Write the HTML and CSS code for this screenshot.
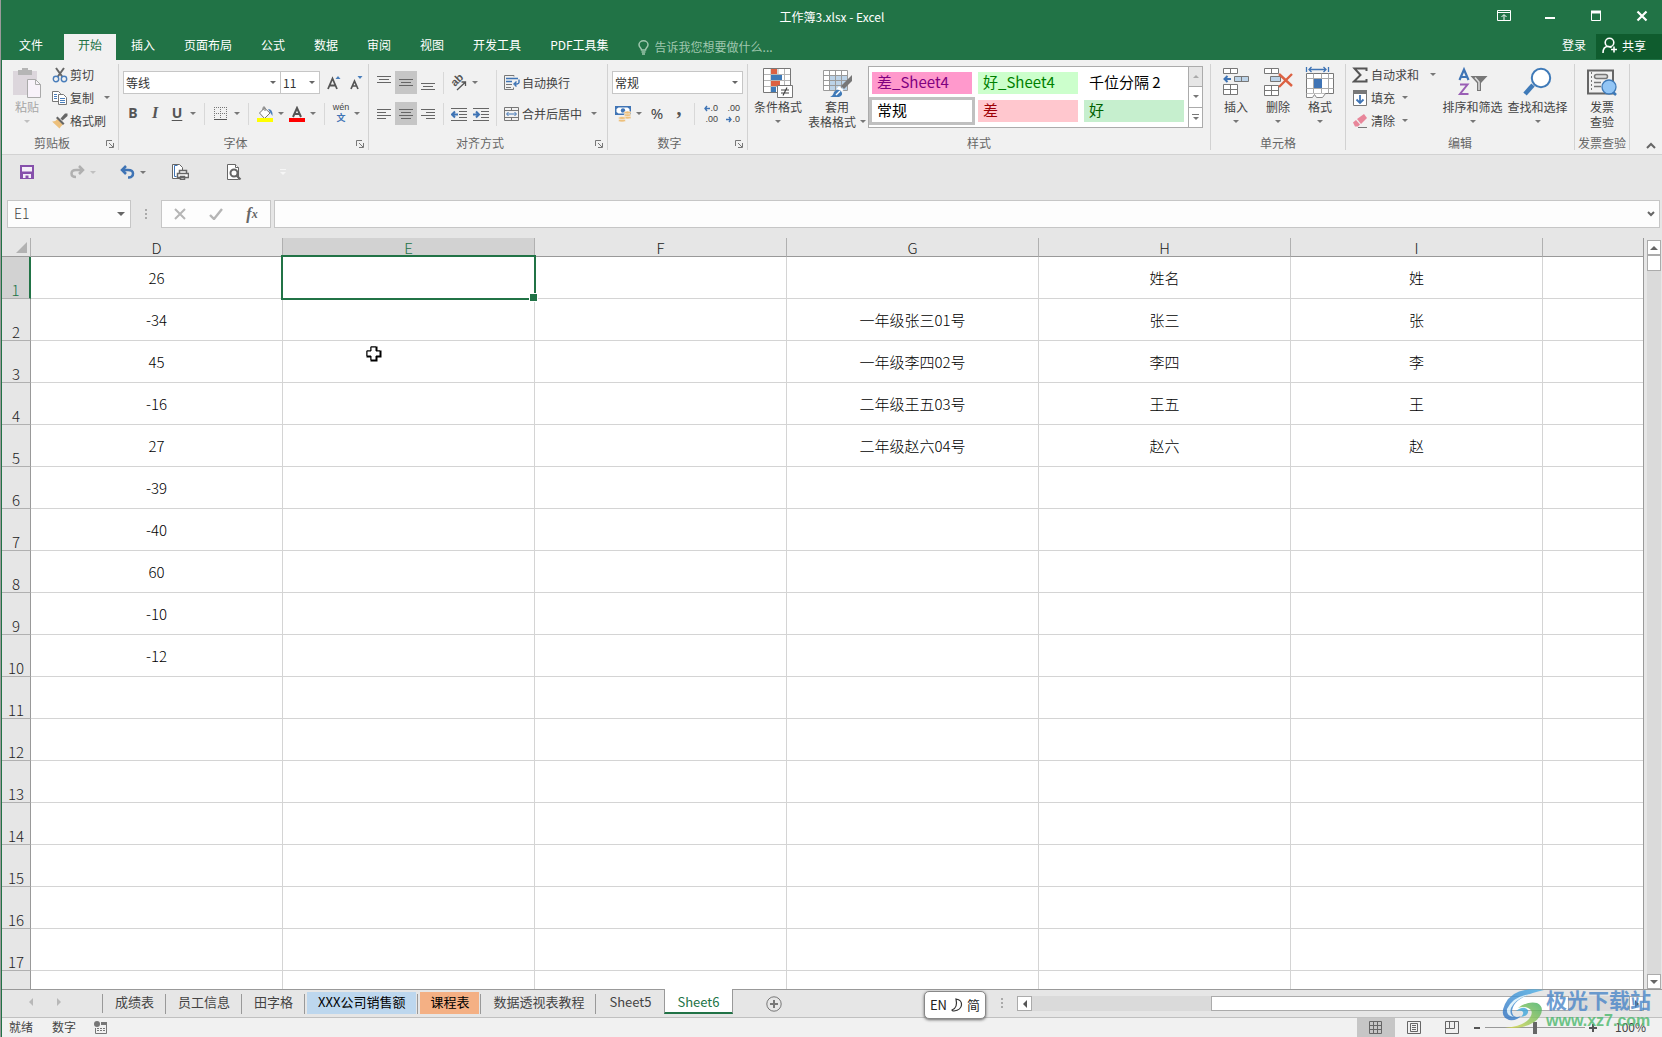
FILE: index.html
```html
<!DOCTYPE html>
<html lang="zh-CN">
<head>
<meta charset="utf-8">
<title>工作簿3.xlsx - Excel</title>
<link rel="stylesheet" href="styles.css">
</head>
<body>
<div class="app">
  <header class="titlebar">
    <h1 class="title">工作簿3.xlsx - Excel</h1>
    <div class="win-controls">
      <button aria-label="功能区显示选项"><svg width="14" height="12" viewBox="0 0 14 12" fill="none" stroke="#fff"><path d="M.5 .5h13v10H.5zM.5 2.5h13M7 10V5M4.5 7L7 4.500 9.500 7"/></svg></button>
      <button aria-label="最小化"><svg width="12" height="12" viewBox="0 0 12 12"><path d="M1 7h10v2H1z" fill="#fff"/></svg></button>
      <button aria-label="最大化"><svg width="12" height="12" viewBox="0 0 12 12" fill="none" stroke="#fff"><path d="M1.500 1.500h9v9h-9z"/><path d="M1 2h10" stroke-width="3"/></svg></button>
      <button aria-label="关闭"><svg width="12" height="12" viewBox="0 0 12 12" stroke="#fff" stroke-width="2.200"><path d="M1.500 1.500l9 9M10.500 1.500l-9 9"/></svg></button>
    </div>
  </header>

  <nav class="tabs">
    <button class="tab file">文件</button>
    <button class="tab active">开始</button>
    <button class="tab">插入</button>
    <button class="tab">页面布局</button>
    <button class="tab">公式</button>
    <button class="tab">数据</button>
    <button class="tab">审阅</button>
    <button class="tab">视图</button>
    <button class="tab">开发工具</button>
    <button class="tab">PDF工具集</button>
    <label class="tell">
      <svg width="11" height="15" viewBox="0 0 11 15" fill="none" stroke="#9fc7ae" stroke-width="1.500"><path d="M3.500 10C3.500 8 1 7.500 1 4.800a4.500 4 0 0 1 9 0C10 7.500 7.500 8 7.500 10z"/><path d="M3.500 12h4M4 14h3"/></svg>
      <input type="text" placeholder="告诉我您想要做什么..." aria-label="告诉我您想要做什么">
    </label>
    <a class="signin" href="#">登录</a>
    <button class="share"><svg width="16" height="17" viewBox="0 0 16 17" fill="none" stroke="#fff" stroke-width="1.600"><circle cx="7.500" cy="5.500" r="4.300"/><path d="M1 16c0-4 2-6.500 5-6.500 1.500 0 2.500.3 3.500 1.200M12 9.500v6M9 12.500h6"/></svg>共享</button>
  </nav>

  <section class="ribbon">
    <div class="group g-clip">
      <div class="body">
        <button class="big w50 off">
          <svg width="30" height="30" viewBox="0 0 30 30"><path d="M1 3h24v24H1z" fill="#dcd6dc"/><path d="M6 2h4V0h6v2h4v5H6z" fill="#b5b5b5"/><path d="M15.500 11.500h8l5 5v13h-13z" fill="#f8f2fa" stroke="#aaa"/><path d="M23.500 11.500v5h5" fill="none" stroke="#aaa"/></svg>
          <span>粘贴</span><i class="caret"></i>
        </button>
        <div class="stack">
          <button class="small"><svg width="16" height="16" viewBox="0 0 16 16" fill="none"><path d="M4 1l6.500 9M12 1L5.500 10" stroke="#666" stroke-width="2"/><circle cx="4" cy="12" r="2.700" stroke="#4a7ebb" stroke-width="1.400"/><circle cx="12" cy="12" r="2.700" stroke="#4a7ebb" stroke-width="1.400"/></svg>剪切</button>
          <button class="small"><svg width="16" height="16" viewBox="0 0 16 16" fill="#fff" stroke="#777"><path d="M.5 1.500h6l2 2v8h-8z"/><path d="M6.500 4.500h5l3 3v7h-8z"/><path d="M2 4.500h3M2 6.500h3M2 8.500h3M8 8.500h5M8 10.500h5M8 12.500h5" stroke="#4a7ebb"/></svg>复制<i class="caret far"></i></button>
          <button class="small"><svg width="16" height="16" viewBox="0 0 16 16"><path d="M0 8.500q3 .5 5.500-2.500l5.500 5.500q-2 1.500-3.500 4z" fill="#edc07c"/><path d="M5.500 3.500l7 7-1.500 1.500L4 5z" fill="#666"/><path d="M8.500 5.500l2 2 5-4.500V.5h-2.500z" fill="#666"/></svg>格式刷</button>
        </div>
      </div>
      <div class="foot"><span>剪贴板</span><button class="launch" aria-label="剪贴板设置"><svg width="8" height="8" viewBox="0 0 8 8" fill="none" stroke="#777"><path d="M.5 6V.5H6M3 3l4 4M7.500 3v4.500H3"/></svg></button></div>
    </div>

    <div class="group g-font">
      <div class="body rows">
        <div class="row">
          <span class="combo w158"><select aria-label="字体"><option>等线</option></select></span>
          <span class="combo w40"><select aria-label="字号"><option>11</option></select></span>
          <button class="tb grow-a" aria-label="增大字号"><svg width="16" height="16" viewBox="0 0 16 16"><path d="M1 14L5.500 3.500 10 14M2.500 10.500h6" fill="none" stroke="#555" stroke-width="1.800"/><path d="M8.500 4L11 1l2.500 3z" fill="#4a7ebb"/></svg></button>
          <button class="tb" aria-label="减小字号"><svg width="16" height="16" viewBox="0 0 16 16"><path d="M2 14l3.500-8L9 14M3 11h5" fill="none" stroke="#555" stroke-width="1.700"/><path d="M8.500 1L11 4l2.500-3z" fill="#4a7ebb"/></svg></button>
        </div>
        <div class="row wide-sep">
          <button class="tb fmt b">B</button><button class="tb fmt i">I</button><button class="tb fmt u">U</button><button class="cb" aria-label="下划线选项"><i class="caret"></i></button>
          <i class="sep"></i>
          <button class="tb" aria-label="边框"><svg width="14" height="14" viewBox="0 0 14 14" fill="none" stroke="#777"><path d="M.5 0v13M6.500 0v13M12.500 0v13M0 .5h13M0 6.500h13" stroke-dasharray="1 1"/><path d="M0 12.500h13" stroke="#555"/></svg></button><button class="cb" aria-label="边框选项"><i class="caret"></i></button>
          <i class="sep"></i>
          <button class="tb" aria-label="填充颜色"><svg width="16" height="16" viewBox="0 0 16 16"><path d="M2.500 7l5-5 5.500 5-5.500 5.500z" fill="#fff" stroke="#777"/><path d="M6 4V1.500q1-1.500 2 0V5" fill="none" stroke="#777"/><path d="M11 3q5 0 4.500 7l-2-3z" fill="#4a7ebb"/><path d="M0 12h16v4H0z" fill="#ff0"/></svg></button><button class="cb" aria-label="填充颜色选项"><i class="caret"></i></button>
          <button class="tb" aria-label="字体颜色"><svg width="16" height="16" viewBox="0 0 16 16"><path d="M4 11L8 2l4 9M5.500 8h5" fill="none" stroke="#555" stroke-width="2"/><path d="M0 12h16v4H0z" fill="#f00"/></svg></button><button class="cb" aria-label="字体颜色选项"><i class="caret"></i></button>
          <i class="sep"></i>
          <button class="tb pinyin" aria-label="拼音"><span>wén</span><b>文</b></button><button class="cb" aria-label="拼音选项"><i class="caret"></i></button>
        </div>
      </div>
      <div class="foot"><span>字体</span><button class="launch" aria-label="字体设置"><svg width="8" height="8" viewBox="0 0 8 8" fill="none" stroke="#777"><path d="M.5 6V.5H6M3 3l4 4M7.500 3v4.500H3"/></svg></button></div>
    </div>

    <div class="group g-align">
      <div class="body">
        <div class="rows">
          <div class="row">
            <button class="tb" aria-label="顶端对齐"><svg class="ln" width="14" height="16" viewBox="0 0 14 16"><path d="M0 1.500h14M2 4.500h10M0 7.500h14"/></svg></button><button class="tb on" aria-label="垂直居中"><svg class="ln" width="14" height="16" viewBox="0 0 14 16"><path d="M0 4.500h14M2 7.500h10M0 10.500h14"/></svg></button><button class="tb" aria-label="底端对齐"><svg class="ln" width="14" height="16" viewBox="0 0 14 16"><path d="M0 8.500h14M2 11.500h10M0 14.500h14"/></svg></button>
            <i class="sep"></i>
            <button class="tb" aria-label="方向"><svg class="orient" width="16" height="16" viewBox="0 0 16 16"><text x="4" y="12" transform="rotate(-45 4 12)">ab</text><path d="M6 15L14 7.500M10.500 7H14.500V11" fill="none" stroke="#555" stroke-width="1.300"/></svg></button><button class="cb" aria-label="方向选项"><i class="caret"></i></button>
          </div>
          <div class="row">
            <button class="tb" aria-label="左对齐"><svg class="ln" width="14" height="14" viewBox="0 0 14 14"><path d="M0 2.500h14M0 5.500h9M0 8.500h14M0 11.500h9"/></svg></button><button class="tb on" aria-label="居中"><svg class="ln" width="14" height="14" viewBox="0 0 14 14"><path d="M0 2.500h14M2 5.500h10M0 8.500h14M2 11.500h10"/></svg></button><button class="tb" aria-label="右对齐"><svg class="ln" width="14" height="14" viewBox="0 0 14 14"><path d="M0 2.500h14M5 5.500h9M0 8.500h14M5 11.500h9"/></svg></button>
            <i class="sep"></i>
            <button class="tb" aria-label="减少缩进"><svg class="ln" width="16" height="14" viewBox="0 0 16 14"><path d="M0 1.500h16M8 4.500h8M8 7.500h8M8 10.500h8M0 13.500h16"/><path d="M7 7.500H2M4 4.500l-3 3 3 3" stroke="#3f74b5" stroke-width="2"/></svg></button><button class="tb" aria-label="增加缩进"><svg class="ln" width="16" height="14" viewBox="0 0 16 14"><path d="M0 1.500h16M8 4.500h8M8 7.500h8M8 10.500h8M0 13.500h16"/><path d="M0 7.500h5M3 4.500l3 3-3 3" stroke="#3f74b5" stroke-width="2"/></svg></button>
          </div>
        </div>
        <i class="sep long"></i>
        <div class="rows">
          <div class="row"><button class="txt"><svg width="16" height="16" viewBox="0 0 16 16" fill="none" stroke="#777"><path d="M10 1.500V.5H.5v14h9v-2M2 9.500h6M2 12.500h5"/><path d="M2 3.500h12M2 6.500h6M15 4.500v3q0 1-2 1.500h-2M12.500 6.500L10 9l2.500 2.500" stroke="#3f74b5" stroke-width="1.400"/></svg>自动换行</button></div>
          <div class="row"><button class="txt"><svg width="16" height="16" viewBox="0 0 16 16" fill="none" stroke="#777"><path d="M.5 1.500h14v13H.5zM.5 4.500h14M.5 11.500h14M7.500 1.500v3M7.500 11.500v3"/><path d="M3 8h9M4.500 6L2.500 8l2 2M10.500 6l2 2-2 2" stroke="#3f74b5"/></svg>合并后居中</button><button class="cb apart" aria-label="合并选项"><i class="caret"></i></button></div>
        </div>
      </div>
      <div class="foot"><span>对齐方式</span><button class="launch" aria-label="对齐设置"><svg width="8" height="8" viewBox="0 0 8 8" fill="none" stroke="#777"><path d="M.5 6V.5H6M3 3l4 4M7.500 3v4.500H3"/></svg></button></div>
    </div>

    <div class="group g-num">
      <div class="body rows">
        <div class="row"><span class="combo w131"><select aria-label="数字格式"><option>常规</option></select></span></div>
        <div class="row">
          <button class="tb" aria-label="会计数字格式"><svg width="16" height="16" viewBox="0 0 16 16"><path d="M0 0h16v9H0z" fill="#3f74b5"/><path d="M1.500 3l2-1.500h9l2 1.500v3l-2 1.500h-9l-2-1.500z" fill="#fff"/><circle cx="8" cy="4.500" r="2.200" fill="#3f74b5"/><g fill="#edc07c" stroke="#f1f1f1" stroke-width=".6"><ellipse cx="12.500" cy="11.500" rx="3.500" ry="1.500"/><ellipse cx="12.500" cy="9" rx="3.500" ry="1.500"/><ellipse cx="12.500" cy="6.500" rx="3.500" ry="1.500"/><ellipse cx="7" cy="14.500" rx="3.500" ry="1.500"/><ellipse cx="7" cy="12" rx="3.500" ry="1.500"/></g></svg></button><button class="cb" aria-label="会计格式选项"><i class="caret"></i></button>
          <button class="tb pct">%</button><button class="tb comma">,</button>
          <i class="sep"></i>
          <button class="tb dec" aria-label="增加小数位数"><span><svg width="6" height="7" viewBox="0 0 6 7" fill="none" stroke="#3f74b5" stroke-width="1.400"><path d="M6 3.500H1M3 1L1 3.500 3 6"/></svg>.0</span><span>.00</span></button><button class="tb dec" aria-label="减少小数位数"><span>.00</span><span><svg width="6" height="7" viewBox="0 0 6 7" fill="none" stroke="#3f74b5" stroke-width="1.400"><path d="M0 3.500h5M3 1l2 2.500L3 6"/></svg>.0</span></button>
        </div>
      </div>
      <div class="foot"><span>数字</span><button class="launch" aria-label="数字设置"><svg width="8" height="8" viewBox="0 0 8 8" fill="none" stroke="#777"><path d="M.5 6V.5H6M3 3l4 4M7.500 3v4.500H3"/></svg></button></div>
    </div>

    <div class="group g-style">
      <div class="body">
        <button class="big w60">
          <svg width="30" height="30" viewBox="0 0 30 30"><path d="M.5 .5h27v24H.5z" fill="#fff" stroke="#777"/><path d="M8 1v23M15 1v23M21.500 1v23M1 6.500h26M1 12.500h26M1 18.500h26" stroke="#b5b5b5"/><path d="M8 1h6v5H8zM8 13h9v5H8z" fill="#dc6142"/><path d="M8 7h11v5H8zM8 19h5v5H8z" fill="#3f7ab8"/><path d="M14.500 17.500h15v12h-15z" fill="#fff" stroke="#777"/><path d="M18 22h8M18 25h8M24 19.500l-4 8" stroke="#444" stroke-width="1.200"/></svg>
          <span>条件格式</span><i class="caret"></i>
        </button>
        <button class="big w58">
          <svg width="30" height="30" viewBox="0 0 30 30"><path d="M1.500 2.500h24v20h-24z" fill="#fff"/><path d="M8 8h18v14H8z" fill="#bcd3e8"/><path d="M1.500 2.500h24v20h-24zM7.500 2.500v20M13.500 2.500v20M19.500 2.500v20M1.500 7.500h24M1.500 12.500h24M1.500 17.500h24" fill="none" stroke="#9a9a9a"/><path d="M30 7v6L22 21l-3-3z" fill="#777"/><path d="M17 18l4.500 4-2 2-5-3z" fill="#fff"/><path d="M8 29q3-1 4-5 3-4 7-1 3 4-2 6z" fill="#3f7ab8"/><path d="M14 27l4-4" stroke="#fff" stroke-width="1.500"/></svg>
          <span>套用</span><span class="last">表格格式<i class="caret"></i></span>
        </button>
        <div class="gallery">
          <div class="swatches">
            <button class="sw pink">差_Sheet4</button><button class="sw lime">好_Sheet4</button><button class="sw">千位分隔 2</button>
            <button class="sw picked">常规</button><button class="sw bad">差</button><button class="sw good">好</button>
          </div>
          <div class="gscroll">
            <button class="dim" aria-label="上一行"><i class="caret up"></i></button>
            <button aria-label="下一行"><i class="caret"></i></button>
            <button aria-label="其他样式"><i class="bar"></i><i class="caret"></i></button>
          </div>
        </div>
      </div>
      <div class="foot"><span>样式</span></div>
    </div>

    <div class="group g-cells">
      <div class="body">
        <button class="big w42"><svg width="28" height="30" viewBox="0 0 28 30"><g fill="#fff" stroke="#777"><path d="M1.500 .5h14v5h-14zM8.500 .5v5M1.500 16.500h14v10h-14zM8.500 16.500v10M1.500 21.500h14"/><path d="M12.500 8.500h14v5h-14zM19.500 8.500v5" fill="#bcd3e8"/></g><path d="M9 11H3M5.500 8L2.500 11l3 3" fill="none" stroke="#3f74b5" stroke-width="2"/></svg><span>插入</span><i class="caret"></i></button>
        <button class="big w42"><svg width="30" height="30" viewBox="0 0 30 30"><g fill="#fff" stroke="#777"><path d="M1.500 .5h14v5h-14zM8.500 .5v5M1.500 17.500h14v10h-14zM8.500 17.500v10M1.500 22.500h14"/><path d="M7.500 8.500h10v5h-10z" fill="#bcd3e8"/></g><path d="M16 6l13 12M29 6L16 19" stroke="#dc6142" stroke-width="2.400"/></svg><span>删除</span><i class="caret"></i></button>
        <button class="big w42"><svg width="30" height="30" viewBox="0 0 30 30"><path d="M1.500 5.500h27v20h-27z" fill="#fff" stroke="#777"/><path d="M1.500 10.500h27M1.500 20.500h27M8.500 5.500v20M16.500 5.500v20M23.500 5.500v20" stroke="#aaa"/><path d="M9 11h8v9H9z" fill="#3f74b5"/><path d="M1.500 25.500v4h6l2-3 2 3h6l3-4" fill="#fff" stroke="#888"/><path d="M1.500-1v5M23.500-1v5M4 1.500h17M6.500-1L4 1.500 6.500 4M18.500-1L21 1.500 18.500 4" fill="none" stroke="#3f74b5" stroke-width="1.300"/></svg><span>格式</span><i class="caret"></i></button>
      </div>
      <div class="foot"><span>单元格</span></div>
    </div>

    <div class="group g-edit">
      <div class="body">
        <div class="stack">
          <button class="small"><svg width="16" height="16" viewBox="0 0 16 16" fill="none" stroke="#555" stroke-width="2"><path d="M14.500 4V1.500H2.500L8.500 8l-6.500 6.500h12.500V12"/></svg>自动求和<i class="caret far"></i></button>
          <button class="small"><svg width="16" height="16" viewBox="0 0 16 16"><path d="M1.500 .5h13v15h-13z" fill="#fff" stroke="#777"/><path d="M1 0h14v4H1z" fill="#777"/><path d="M8 5v8M4.500 9.500L8 13l3.500-3.500" fill="none" stroke="#3f74b5" stroke-width="1.800"/></svg>填充<i class="caret near"></i></button>
          <button class="small"><svg width="16" height="16" viewBox="0 0 16 16"><path d="M5 6l7-5 3 4-6 6z" fill="#e8869a"/><path d="M1 9.500l3-2.500 4 4.500-2 2H3z" fill="#e8869a"/><path d="M6 14.500h9" stroke="#777"/></svg>清除<i class="caret near"></i></button>
        </div>
        <button class="big w65 push"><svg width="30" height="30" viewBox="0 0 30 30" fill="none"><path d="M1.500 12L6 1.500 10.500 12M3 9h6" stroke="#3f74b5" stroke-width="2.200"/><path d="M2 16.500h7.500L2 26h8.500" stroke="#9a5fb5" stroke-width="2"/><path d="M12.500 8h17L23 15v8h-4v-8z" fill="#777"/><path d="M17 9.500l4 4.500v8" stroke="#ddd" stroke-width="1.500"/></svg><span>排序和筛选</span><i class="caret"></i></button>
        <button class="big w65"><svg width="30" height="30" viewBox="0 0 30 30"><path d="M10 17L2 26" stroke="#3f7ab8" stroke-width="4.500"/><circle cx="18" cy="10" r="9.200" fill="#fff" stroke="#3f7ab8" stroke-width="2"/></svg><span>查找和选择</span><i class="caret"></i></button>
      </div>
      <div class="foot"><span>编辑</span></div>
    </div>

    <div class="group g-inv">
      <div class="body">
        <button class="big w54"><svg width="32" height="30" viewBox="0 0 32 30"><path d="M2 2.500h25v23H2z" fill="#f1f1f1" stroke="#666" stroke-width="2"/><path d="M5.500 4v20" stroke="#777" stroke-dasharray="2 2"/><rect x="8.500" y="6.500" width="13" height="4" rx="2" fill="#ddd" stroke="#777" stroke-width="1.500"/><path d="M8 14.500h7M8 18.500h7" stroke="#777" stroke-width="1.500"/><path d="M25 22l5 5" stroke="#3f7ab8" stroke-width="2.500"/><circle cx="23" cy="19" r="7" fill="#92c5f5" stroke="#3f7ab8" stroke-width="1.300"/></svg><span>发票</span><span>查验</span></button>
      </div>
      <div class="foot"><span>发票查验</span></div>
    </div>
    <button class="collapse" aria-label="折叠功能区"><svg width="10" height="7" viewBox="0 0 10 7" fill="none" stroke="#666" stroke-width="2"><path d="M1 6l4-4 4 4"/></svg></button>
  </section>

  <div class="quick">
    <button aria-label="保存"><svg width="14" height="14" viewBox="0 0 14 14"><path d="M0 0h14v14H0z" fill="#8650ab"/><path d="M2 2h10v4.500H2zM3 9h8v4H3z" fill="#f4eef8"/><path d="M5.500 10.500h3V13h-3z" fill="#8650ab"/></svg></button>
    <button class="q-redo" aria-label="恢复"><svg width="15" height="14" viewBox="0 0 15 14" fill="none" stroke="#b0b0b0" stroke-width="2.500"><path d="M9 1l4 4-4 4M13 5H6Q1.500 5 1.500 8.500T6 12"/></svg></button>
    <i class="caret pale"></i>
    <button class="q-undo" aria-label="撤消"><svg width="15" height="14" viewBox="0 0 15 14" fill="none" stroke="#3f74b5" stroke-width="2.500"><path d="M6 1L2 5l4 4M2 5h6q5 0 5 3.500T9 12.500H8"/></svg></button>
    <i class="caret"></i>
    <button class="q-print" aria-label="快速打印"><svg width="17" height="16" viewBox="0 0 17 16" fill="#fff" stroke="#666"><path d="M.5 .5h7l3 3v11H.5z"/><path d="M5.500 1.500h-3v11h2" fill="none" stroke="#3f74b5"/><path d="M5.500 9.500h11v4h-11zM7.500 6.500h7v3h-7zM8.500 12.500h4v3h-4z" stroke-width="1.500"/></svg></button>
    <button class="q-view" aria-label="打印预览"><svg width="15" height="16" viewBox="0 0 15 16" fill="#fff" stroke="#666"><path d="M.5 .5h8l3 3v12H.5z"/><path d="M8.500 .5v3h3"/><circle cx="7" cy="9" r="3.500" stroke-width="2"/><path d="M9.500 11.500l4 4" stroke-width="2.200"/></svg></button>
    <span class="more"><i class="bar"></i><i class="caret ghost"></i></span>
  </div>

  <div class="formula">
    <div class="namebox"><input type="text" value="E1" aria-label="名称框"><button aria-label="名称列表"><i class="caret lg"></i></button></div>
    <i class="dots"></i>
    <div class="fx">
      <button aria-label="取消"><svg width="12" height="12" viewBox="0 0 12 12" stroke="#b5b5b5" stroke-width="2"><path d="M1 1l10 10M11 1L1 11"/></svg></button>
      <button aria-label="输入"><svg width="14" height="12" viewBox="0 0 14 12" fill="none" stroke="#b5b5b5" stroke-width="2.400"><path d="M1 7l4 4 8-10"/></svg></button>
      <button class="fn" aria-label="插入函数">f<sub>x</sub></button>
    </div>
    <div class="fbar"><input type="text" aria-label="编辑栏"><button aria-label="展开编辑栏"><svg width="8" height="6" viewBox="0 0 8 6" fill="none" stroke="#666" stroke-width="2"><path d="M1 1l3 3 3-3"/></svg></button></div>
  </div>

  <main class="sheet">
    <div class="grid">
      <table>
        <colgroup><col class="c-num"><col class="c"><col class="c"><col class="c"><col class="c"><col class="c"><col class="c"><col></colgroup>
        <thead><tr><th class="corner"><svg width="11" height="11" viewBox="0 0 11 11"><path d="M11 0v11H0z" fill="#b2b2b2"/></svg></th><th>D</th><th class="sel">E</th><th>F</th><th>G</th><th>H</th><th>I</th><th></th></tr></thead>
        <tbody>
          <tr><th class="sel">1</th><td>26</td><td class="cur"><i class="ring"></i></td><td></td><td></td><td>姓名</td><td>姓</td><td></td></tr>
          <tr><th>2</th><td>-34</td><td></td><td></td><td>一年级张三01号</td><td>张三</td><td>张</td><td></td></tr>
          <tr><th>3</th><td>45</td><td></td><td></td><td>一年级李四02号</td><td>李四</td><td>李</td><td></td></tr>
          <tr><th>4</th><td>-16</td><td></td><td></td><td>二年级王五03号</td><td>王五</td><td>王</td><td></td></tr>
          <tr><th>5</th><td>27</td><td></td><td></td><td>二年级赵六04号</td><td>赵六</td><td>赵</td><td></td></tr>
          <tr><th>6</th><td>-39</td><td></td><td></td><td></td><td></td><td></td><td></td></tr>
          <tr><th>7</th><td>-40</td><td></td><td></td><td></td><td></td><td></td><td></td></tr>
          <tr><th>8</th><td>60</td><td></td><td></td><td></td><td></td><td></td><td></td></tr>
          <tr><th>9</th><td>-10</td><td></td><td></td><td></td><td></td><td></td><td></td></tr>
          <tr><th>10</th><td>-12</td><td></td><td></td><td></td><td></td><td></td><td></td></tr>
          <tr><th>11</th><td></td><td></td><td></td><td></td><td></td><td></td><td></td></tr>
          <tr><th>12</th><td></td><td></td><td></td><td></td><td></td><td></td><td></td></tr>
          <tr><th>13</th><td></td><td></td><td></td><td></td><td></td><td></td><td></td></tr>
          <tr><th>14</th><td></td><td></td><td></td><td></td><td></td><td></td><td></td></tr>
          <tr><th>15</th><td></td><td></td><td></td><td></td><td></td><td></td><td></td></tr>
          <tr><th>16</th><td></td><td></td><td></td><td></td><td></td><td></td><td></td></tr>
          <tr><th>17</th><td></td><td></td><td></td><td></td><td></td><td></td><td></td></tr>
          <tr><th></th><td></td><td></td><td></td><td></td><td></td><td></td><td></td></tr>
        </tbody>
      </table>
      <svg class="pointer" width="16" height="16" viewBox="0 0 16 16"><path d="M5.500 1.500h5v4h4v5h-4v4h-5v-4h-4v-5h4z" stroke="#000" stroke-width="2"/><path d="M5 1h5v4h4v5h-4v4H5v-4H1V5h4z" fill="#fff" stroke="#000"/></svg>
    </div>
    <div class="vscroll">
      <button aria-label="向上滚动"><i class="caret up lg"></i></button>
      <div class="vthumb"></div>
      <div class="vtrack"></div>
      <button aria-label="向下滚动"><i class="caret lg"></i></button>
    </div>
  </main>

  <div class="sheetbar">
    <div class="nav"><button aria-label="上一张"><i class="tri left"></i></button><button aria-label="下一张"><i class="tri right"></i></button></div>
    <ul class="sheets">
      <li><button>成绩表</button></li>
      <li><button>员工信息</button></li>
      <li><button>田字格</button></li>
      <li><button class="blue">XXX公司销售额</button></li>
      <li><button class="orange">课程表</button></li>
      <li><button>数据透视表教程</button></li>
      <li class="before"><button>Sheet5</button></li>
      <li class="current"><button>Sheet6</button></li>
    </ul>
    <button class="add" aria-label="新工作表"><svg width="16" height="16" viewBox="0 0 16 16" fill="none" stroke="#777"><circle cx="8" cy="8" r="7.200"/><path d="M8 4v8M4 8h8" stroke-width="2"/></svg></button>
    <i class="dots end"></i>
    <div class="hscroll">
      <button aria-label="向左滚动"><i class="tri left dark"></i></button>
      <div class="htrack"><div class="hthumb"></div></div>
      <button aria-label="向右滚动"><i class="tri right dark"></i></button>
    </div>
  </div>

  <footer class="status">
    <span>就绪</span><span class="mode">数字</span>
    <svg class="macro" width="13" height="13" viewBox="0 0 13 13"><circle cx="3" cy="3" r="3" fill="#777"/><path d="M7 1h6v3H7z" fill="#777"/><path d="M1.500 7v5.500h11V4" fill="none" stroke="#777"/><path d="M3 7.500h8M3 9.500h8" stroke="#777" stroke-dasharray="2 1"/></svg>
    <div class="views">
      <button class="on" aria-label="普通"><svg width="14" height="14" viewBox="0 0 14 14" fill="none" stroke="#666"><path d="M.5 .5h12v12H.5zM4.500 .5v12M8.500 .5v12M.5 4.500h12M.5 8.500h12"/></svg></button>
      <button aria-label="页面布局"><svg width="14" height="14" viewBox="0 0 14 14" fill="none" stroke="#666"><path d="M.5 .5h13v12H.5zM3.500 2.500h7v8h-7zM5 4.500h4M5 6.500h4M5 8.500h4"/></svg></button>
      <button aria-label="分页预览"><svg width="14" height="14" viewBox="0 0 14 14" fill="none" stroke="#666"><path d="M.5 .5h13v12H.5zM4.500 .5v7h5v-7M4.500 7.500h-4"/></svg></button>
    </div>
    <button class="zoom" aria-label="缩小"><svg width="8" height="8" viewBox="0 0 8 8"><path d="M1 3h6v2H1z" fill="#555"/></svg></button>
    <input class="slider" type="range" min="0" max="100" value="50" aria-label="显示比例">
    <button class="zoom" aria-label="放大"><svg width="8" height="8" viewBox="0 0 8 8"><path d="M0 3h3V0h2v3h3v2H5v3H3V5H0z" fill="#555"/></svg></button>
    <button class="percent">100%</button>
  </footer>

  <div class="ime"><span>EN</span><svg width="12" height="14" viewBox="0 0 12 14" fill="none" stroke="#333" stroke-width="1.200"><path d="M5 1q6 1 5.500 6T3 13q-2 0-2-1 6-2 4-11z"/></svg><span>简</span></div>

  <div class="watermark">
    <svg width="42" height="40" viewBox="0 0 42 40">
      <defs><linearGradient id="wb" x1="0" y1="1" x2="1" y2="0"><stop offset="0" stop-color="#2f6fc0"/><stop offset="1" stop-color="#4db4ea"/></linearGradient><linearGradient id="wg" x1="0" y1="1" x2="1" y2="0"><stop offset="0" stop-color="#e3dc4c"/><stop offset="1" stop-color="#3fae62"/></linearGradient></defs>
      <path d="M42 1Q12-3 3 15q-6 13 4 16 8 1 12-4-8 3-9-4Q10 8 42 1z" fill="url(#wb)"/>
      <path d="M5 20Q12 6 30 5 14 9 9 19q-2 7 3 9-8-1-7-8z" fill="#d8effb"/>
      <path d="M16 19q9-7 19-5 8 4 3 13-8 13-35 12 18-2 24-9 6-8-1-11-5-2-10 0z" fill="url(#wg)"/>
      <path d="M14 22q8-6 12-1 1 6-7 7 4-4 1-6-2-1-6 0z" fill="#3fa7dc"/>
    </svg>
    <div><b>极光下载站</b><span>www.xz7.com</span></div>
  </div>
</div>
</body>
</html>
```
FILE: styles.css
```css
* { box-sizing: border-box; }
body {
  margin: 0;
  background: #9a9a9a;
  color: #444;
  font: 12px/16px "Noto Sans CJK SC", "Noto Sans", sans-serif;
}
button, input, select { font: inherit; color: inherit; margin: 0; padding: 0; border: 0; background: none; outline: 0; }
button { display: flex; align-items: center; justify-content: center; white-space: nowrap; flex: none; }
svg { display: block; flex: none; }
i { font-style: normal; }

.app {
  position: relative;
  display: flex;
  flex-direction: column;
  height: 100vh;
  margin-left: 1px;
  border-left: 1px solid #217346;
  background: #e6e6e6;
  overflow: hidden;
}

/* small triangles */
.caret { display: block; flex: none; width: 0; height: 0; border: 3px solid transparent; border-top-color: #777; border-bottom: 0; }
.caret.up { border: 3px solid transparent; border-bottom-color: #aaa; border-top: 0; }
.caret.lg { border-width: 4px 4px 0; border-top-color: #666; }
.caret.up.lg { border-width: 0 4px 4px; border-bottom-color: #666; }
.caret.far { margin-left: 8px; }
.caret.near { margin-left: 4px; }
.caret.pale { border-top-color: #c0c0c0; }
.caret.ghost { border-top-color: #f6f6f6; }
.tri { width: 0; height: 0; border: 4px solid transparent; }
.tri.left { border-right-color: #b8b8b8; border-left: 0; }
.tri.right { border-left-color: #b8b8b8; border-right: 0; }
.tri.left.dark { border-right-color: #555; }
.tri.right.dark { border-left-color: #555; }

/* title and tabs */
.titlebar { display: flex; flex: none; height: 34px; background: #217346; color: #fff; align-items: center; position: relative; }
.title { flex: 1; margin: 0; font-size: 12px; line-height: 16px; font-weight: 400; text-align: center; }
.win-controls { position: absolute; right: 12px; top: 8px; display: flex; gap: 30px; }
.win-controls button { width: 16px; height: 16px; }
.tabs { display: flex; flex: none; height: 26px; background: #217346; color: #fff; gap: 1px; }
.tab { padding: 0 14px 4px; }
.tab.file { width: 61px; padding: 0 3px 4px 0; }
.tab.active { background: #f1f1f1; color: #217346; }
.tell { display: flex; flex: 1; align-items: center; gap: 6px; margin-left: 14px; }
.tell input { flex: 1; }
.tell input::placeholder { color: #9fc7ae; opacity: 1; }
.signin { color: #fff; text-decoration: none; line-height: 22px; margin-right: 9px; }
.share { width: 66px; height: 25px; gap: 4px; padding: 0 10px 2px 0; background: #0f5c2e; }

/* ribbon */
.ribbon { display: flex; flex: none; height: 95px; padding: 4px 0; background: #f1f1f1; border-bottom: 1px solid #d2d2d2; }
.group { display: flex; flex: none; flex-direction: column; border-right: 1px solid #d2d2d2; }
.body { display: flex; flex: 1; }
.foot { display: flex; height: 14px; align-items: center; color: #666; }
.foot span { flex: 1; text-align: center; }
.launch { width: 16px; height: 12px; align-self: flex-end; }
.g-clip { width: 117px; }
.g-font { width: 250px; }
.g-font .body { padding-left: 4px; }
.g-align { width: 239px; }
.g-align .body, .g-num .body, .g-cells .body { padding-left: 4px; }
.g-num { width: 140px; }
.g-style { width: 463px; }
.g-cells { width: 135px; }
.g-edit { width: 229px; }
.g-edit .stack { padding-left: 6px; }
.g-edit .body { padding-right: 4px; }
.g-inv { width: 55px; }
.big { flex-direction: column; justify-content: flex-start; padding-top: 4px; line-height: 15px; }
.big svg { margin-bottom: 1px; overflow: visible; }
.big > .caret { margin-top: 6px; }
.big .last { display: flex; align-items: center; gap: 4px; }
.w42 { width: 42px; } .w50 { width: 50px; } .w54 { width: 54px; } .w58 { width: 58px; } .w60 { width: 60px; } .w65 { width: 65px; }
.push { margin-left: auto; }
.off { color: #a6a6a6; }
.off .caret { border-top-color: #c0c0c0; }
.stack { display: flex; flex-direction: column; gap: 2px; align-items: flex-start; }
.small { height: 21px; gap: 2px; }
.g-edit .small { gap: 3px; }
.rows { display: flex; flex-direction: column; gap: 8px; padding-top: 7px; }
.row { display: flex; height: 23px; align-items: center; }
.tb { width: 22px; height: 23px; }
.tb.on { background: #c6c6c6; }
.cb { width: 10px; height: 23px; }
.cb.apart { margin-left: 4px; }
.sep { flex: none; width: 1px; height: 22px; margin: 0 4px; background: #d8d8d8; }
.sep.long { height: 56px; margin-top: 6px; }
.wide-sep { margin-left: -1px; }
.wide-sep .sep { margin: 0 5px 0 6px; }
.ln { fill: none; stroke: #666; }
.orient { font: 700 11px/12px "Liberation Sans", sans-serif; fill: #555; overflow: visible; }
.txt { padding: 0 3px; gap: 2px; height: 23px; }
.fmt { font: 700 14px/20px "Noto Sans", sans-serif; color: #555; padding-bottom: 2px; }
.fmt.i { font-style: italic; font-family: "Liberation Serif", serif; font-size: 16px; }
.fmt.u { text-decoration: underline; text-underline-offset: 2px; }
.grow-a { margin-left: 4px; }
.pinyin { flex-direction: column; font: 9px/10px "Liberation Sans", "Noto Sans CJK SC", sans-serif; }
.pinyin b { color: #3f74b5; line-height: 13px; }
.pct { font: 15px/20px "Noto Sans", sans-serif; margin-left: 2px; padding-bottom: 2px; }
.comma { font: 700 20px/12px "Liberation Serif", serif; padding-bottom: 12px; color: #555; }
.dec { flex-direction: column; align-items: flex-end; padding-right: 3px; font: 9px/11px "Liberation Sans", sans-serif; }
.dec span { display: flex; align-items: center; }
.combo { position: relative; display: block; height: 23px; }
.combo select { appearance: none; display: block; width: 100%; height: 23px; padding: 0 2px; border: 1px solid #c6c6c6; background: #fff; color: #333; }
.combo::after { content: ""; position: absolute; right: 5px; top: 10px; border: 3px solid transparent; border-top-color: #666; border-bottom: 0; }
.w158 { width: 158px; } .w131 { width: 131px; }
.w40 { width: 40px; margin-left: -1px; }
.gallery { display: flex; height: 62px; margin: 2px 0 0 2px; border: 1px solid #ababab; background: #fff; }
.swatches { display: grid; grid-template-columns: repeat(3, 100px); grid-auto-rows: 22px; gap: 6px; padding: 5px 4px 5px 3px; }
.sw { justify-content: flex-start; padding: 0 0 2px 5px; font-size: 15px; line-height: 20px; color: #000; }
.sw.pink { background: #ff99cc; color: #800080; }
.sw.lime { background: #ccffcc; color: #008000; }
.sw.bad { background: #ffc7ce; color: #9c0006; }
.sw.good { background: #c6efce; color: #006100; }
.sw.picked { box-shadow: 0 0 0 3px #c0c0c0; }
.gscroll { display: flex; flex-direction: column; width: 14px; border-left: 1px solid #ababab; }
.gscroll button { flex: 1; flex-direction: column; gap: 2px; border-bottom: 1px solid #ababab; }
.gscroll button:last-child { border-bottom: 0; }
.gscroll .dim { background: #e6e6e6; }
.bar { width: 7px; height: 1px; background: #777; }
.collapse { margin: auto 5px 0 auto; height: 10px; width: 12px; }

/* quick access */
.quick { display: flex; flex: none; align-items: center; height: 45px; padding: 0 0 11px 18px; }
.q-redo { margin: 0 5px 0 36px; }
.quick .q-undo { margin: 0 5px 0 24px; }
.q-print { margin-left: 26px; }
.q-view { margin-left: 38px; }
.more { display: flex; flex-direction: column; gap: 2px; margin-left: 38px; }
.more .bar { background: #f6f6f6; width: 6px; }

/* formula bar */
.formula { display: flex; flex: none; height: 28px; margin-bottom: 10px; padding: 0 2px 0 5px; }
.namebox, .fx, .fbar { display: flex; background: #fdfdfd; border: 1px solid #c6c6c6; }
.namebox { width: 124px; }
.namebox input { flex: 1; min-width: 0; padding: 0 0 2px 6px; font-size: 14px; font-weight: 300; }
.namebox button { width: 18px; }
.dots { width: 2px; height: 11px; margin: auto 14px; background: repeating-linear-gradient(#aaa 0 2px, transparent 2px 4px); }
.fx { width: 110px; justify-content: space-around; }
.fx button { width: 34px; }
.fx .fn { font: italic 700 16px/20px "Liberation Serif", serif; color: #666; }
.fn sub { font-size: 12px; line-height: 12px; vertical-align: -1px; }
.fbar { flex: 1; margin-left: 3px; }
.fbar input { flex: 1; padding: 0 6px; font-size: 14px; }
.fbar button { width: 16px; }

/* cells */
.sheet { display: flex; flex: 1; min-height: 0; border-bottom: 1px solid #999; }
.grid { flex: 1; position: relative; overflow: hidden; background: #fff; border-right: 1px solid #999; }
table { width: 100%; table-layout: fixed; border-collapse: separate; border-spacing: 0; color: #000; font-size: 15px; line-height: 17px; font-weight: 300; }
.c-num { width: 29px; }
.c { width: 252px; }
th { padding: 0; font-weight: 300; vertical-align: bottom; background: #e6e6e6; color: #222; }
thead th { height: 19px; border-right: 1px solid #b0b0b0; border-bottom: 1px solid #999; }
thead th:last-child { border-right: 0; }
th.corner svg { margin: 0 3px 3px auto; }
thead .sel { background: #d2d2d2; color: #217346; border-bottom-color: #217346; }
tbody th { border-right: 1px solid #999; border-bottom: 1px solid #b0b0b0; }
tbody .sel { background: #d2d2d2; color: #217346; border-right: 2px solid #217346; }
td { height: 42px; padding: 0; text-align: center; vertical-align: middle; border-right: 1px solid #d4d4d4; border-bottom: 1px solid #d4d4d4; }
td:last-child { border-right: 0; }
.cur { position: relative; }
.ring { position: absolute; inset: -2px; border: 2px solid #217346; }
.ring::after { content: ""; position: absolute; right: -4px; bottom: -4px; width: 7px; height: 7px; background: #217346; border: 1px solid #fff; }
.pointer { position: absolute; left: 364px; top: 108px; }
.vscroll { display: flex; flex: none; flex-direction: column; width: 18px; padding: 2px 1px 0 3px; }
.vscroll button { height: 15px; background: #fff; border: 1px solid #ababab; }
.vthumb { height: 16px; background: #fff; border: 1px solid #ababab; }
.vtrack { flex: 1; background: #dadada; }

/* sheet tabs */
.sheetbar { display: flex; flex: none; height: 28px; border-bottom: 1px solid #c0c0c0; }
.nav { display: flex; flex: none; width: 101px; padding: 0 0 3px 15px; border-right: 1px solid #999; margin: 4px 0; }
.nav button { width: 28px; }
.sheets { display: flex; list-style: none; margin: 0; padding: 0; height: 24px; font-size: 13px; }
.sheets li { display: flex; position: relative; padding: 2px 2px 0; }
.sheets li::after { content: ""; position: absolute; right: 0; top: 4px; bottom: 0; width: 1px; background: #999; }
.sheets button { padding: 0 10px 3px; height: 22px; }
.sheets .blue { padding: 0 11px 3px; background: #bdd7ee; color: #000; }
.sheets .orange { background: #f4b084; color: #000; }
.sheets .before button, .sheets .current button { padding: 0 11px 3px; }
.sheets .before::after, .sheets .current::after { display: none; }
.sheets .current { margin-top: -1px; height: 25px; padding: 3px 1px 0; background: #fff; color: #217346; border: 1px solid #999; border-width: 0 1px; border-bottom: 2px solid #217346; }
.add { width: 16px; margin-left: 33px; }
.dots.end { margin: auto 14px auto auto; }
.hscroll { display: flex; flex: none; width: 627px; height: 15px; margin: 6px 18px 0 0; }
.hscroll button { width: 15px; background: #fff; border: 1px solid #ababab; }
.htrack { flex: 1; background: #dadada; }
.hthumb { width: 60%; height: 15px; margin-left: 30%; background: #fff; border: 1px solid #ababab; }

/* status */
.status { display: flex; flex: none; align-items: center; height: 19px; padding-left: 7px; background: #f1f1f1; line-height: 16px; }
.status > span { padding-bottom: 2px; }
.mode { margin-left: 19px; }
.macro { margin-left: 18px; }
.views { display: flex; margin-left: auto; height: 19px; }
.views button { width: 38px; }
.views .on { background: #c6c6c6; }
.zoom { width: 12px; }
.slider { appearance: none; width: 100px; height: 12px; margin: 0 2px; background: linear-gradient(#999, #999) center / 100% 1px no-repeat; }
.slider::-webkit-slider-thumb { appearance: none; width: 4px; height: 12px; background: #666; }
.percent { width: 63px; padding-bottom: 2px; }

/* floating items */
.ime { position: absolute; right: 676px; bottom: 18px; display: flex; align-items: center; gap: 4px; height: 28px; padding: 0 5px; background: #fff; border: 1px solid #888; border-radius: 5px; box-shadow: 0 1px 3px #666; font-size: 13px; color: #222; }
.watermark { position: absolute; right: 10px; bottom: 6px; display: flex; align-items: center; gap: 2px; opacity: .8; pointer-events: none; }
.watermark div { display: flex; flex-direction: column; width: 106px; }
.watermark b { color: #4a86c8; font-size: 21px; line-height: 24px; white-space: nowrap; }
.watermark span { color: #4cb86c; font: 700 16px/20px "Liberation Sans", sans-serif; }
```
